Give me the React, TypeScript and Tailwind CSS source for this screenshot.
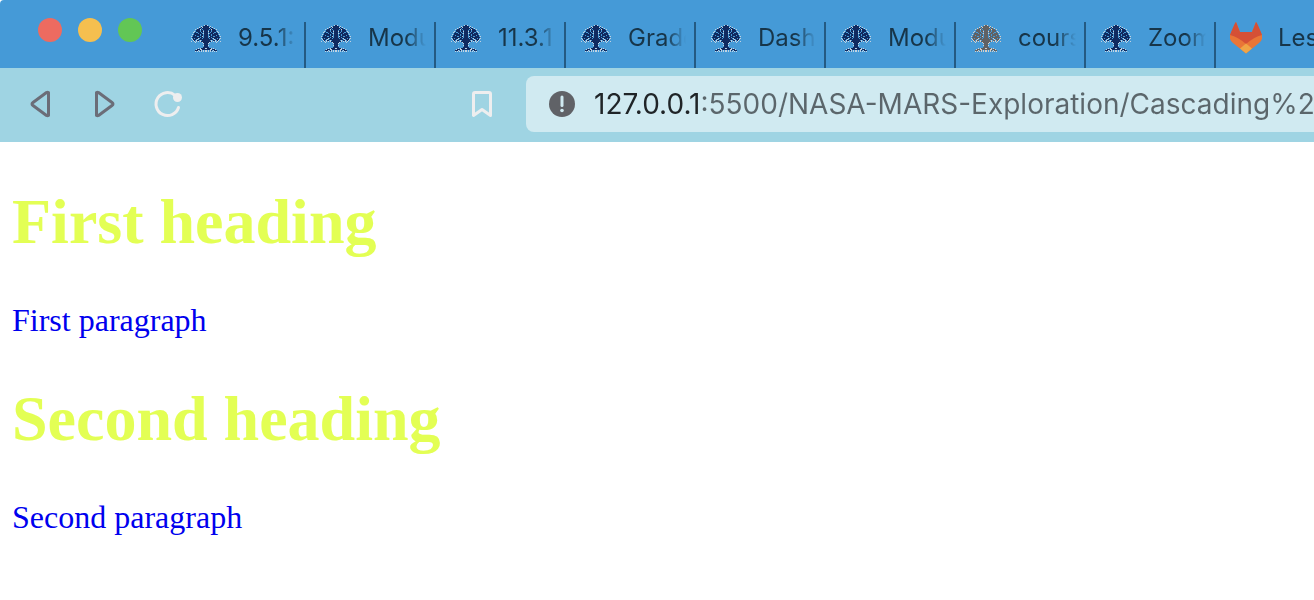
import { useState } from "react";

type TabIcon = "tree" | "grayTree" | "fox";

const tabs: { title: string; icon: TabIcon }[] = [
  { title: "9.5.1:", icon: "tree" },
  { title: "Modu", icon: "tree" },
  { title: "11.3.1", icon: "tree" },
  { title: "Grade", icon: "tree" },
  { title: "Dash", icon: "tree" },
  { title: "Modu", icon: "tree" },
  { title: "cours", icon: "grayTree" },
  { title: "Zoom", icon: "tree" },
  { title: "Les", icon: "fox" },
];

// Left half of the pixel tree, mirrored to the right: # leaf or wood, o light edge
const treeRows = [
  ".............o#",
  "..........o.###",
  "........o.#o###",
  "......o.##.####",
  "....o.###o#.###",
  ".....####.##.##",
  "...o.####.##o##",
  "..o.#..###.#.##",
  "...####.###.o##",
  ".o.######.##.##",
  "..##.####.##.##",
  "o.####..###o.##",
  ".########.##.##",
  "o.#.###o.##.###",
  ".o###.o.#######",
  "..o#.o##.o.####",
  "o..o.o.o.o#####",
  "....o......o###",
  "............o##",
  ".............##",
  "............o##",
  ".............##",
  "............###",
  ".......o.o####o",
  ".....o###oo####",
  "....###o.#o.o.o",
  "....o.o.o.o.o.o",
];

function pixels(mark: string) {
  let d = "";
  treeRows.forEach((row, y) => {
    [...row].forEach((cell, x) => {
      if (cell === mark) d += `M${x + 1} ${y + 3}h1v1h-1zM${30 - x} ${y + 3}h1v1h-1z`;
    });
  });
  return d;
}

const darkPixels = pixels("#");
const lightPixels = pixels("o");

function TreeIcon({ gray = false }: { gray?: boolean }) {
  return (
    <svg viewBox="0 0 32 32" className="size-8 shrink-0" aria-hidden="true" shapeRendering="crispEdges">
      <path d={darkPixels} fill={gray ? "#606163" : "#102a60"} />
      <path d={lightPixels} fill={gray ? "#d5cec7" : "#bfd2e2"} />
    </svg>
  );
}

function FoxIcon() {
  return (
    <svg viewBox="0 0 32 32" className="size-8 shrink-0" aria-hidden="true">
      <path d="M6 0 0 13q-1 5 3 8l13 10.500L29 21q4-3 3-8L26 0l-4 10H10z" fill="#e97637" />
      <path d="M6 0Q5 0 0 13 8 15 16 22 24 15 32 13 27 0 26 0L22 10H10z" fill="#d55036" />
      <path d="m16 21.500 6 5-6 5-6-5z" fill="#f0a545" />
    </svg>
  );
}

function Tab({ title, icon }: { title: string; icon: TabIcon }) {
  return (
    <button
      type="button"
      role="tab"
      className="flex w-[130px] shrink-0 items-start gap-4 border-r-2 border-[#245a82] pr-2 pl-3.5 text-left"
    >
      {icon === "fox" ? <FoxIcon /> : <TreeIcon gray={icon === "grayTree"} />}
      <span className="min-w-0 flex-1 overflow-hidden mask-r-from-65% mask-r-to-100% text-2xl leading-8 whitespace-nowrap text-[#173549]">
        {title}
      </span>
    </button>
  );
}

export default function App() {
  const [url, setUrl] = useState("127.0.0.1:5500/NASA-MARS-Exploration/Cascading%2");
  return (
    <div className="min-h-screen overflow-hidden bg-white font-['Inter','Liberation_Sans',sans-serif]">
      <header>
        <div className="flex h-[68px] overflow-hidden rounded-tl-sm bg-[#459ad7]">
          <div className="flex w-44 shrink-0 gap-4 pt-[18px] pl-[38px]">
            <button type="button" aria-label="Close" className="size-6 rounded-full bg-[#ed6b60]" />
            <button type="button" aria-label="Minimize" className="size-6 rounded-full bg-[#f5bf4f]" />
            <button type="button" aria-label="Zoom window" className="size-6 rounded-full bg-[#62c655]" />
          </div>
          <div role="tablist" className="flex pt-[22px]">
            {tabs.map((tab, index) => (
              <Tab key={index} {...tab} />
            ))}
          </div>
        </div>
        <div className="flex items-center bg-[#9fd4e3] pt-2 pb-2.5">
          <nav className="flex flex-none gap-8 pl-6">
            <button type="button" aria-label="Back">
              <svg viewBox="0 0 32 32" className="size-8" fill="none" stroke="#6b6d78" strokeWidth="3" strokeLinejoin="round">
                <path d="M24.500 4.500v23q-1 .5-2 0L9 17.500q-2-1.500 0-3L22.500 4.500q1-.5 2 0z" />
              </svg>
            </button>
            <button type="button" aria-label="Forward">
              <svg viewBox="0 0 32 32" className="size-8" fill="none" stroke="#6b6d78" strokeWidth="3" strokeLinejoin="round">
                <path d="M8.500 4.500v23q1 .5 2 0L24 17.500q2-1.500 0-3L10.500 4.500q-1-.5-2 0z" />
              </svg>
            </button>
            <button type="button" aria-label="Reload">
              <svg viewBox="0 0 32 32" className="size-8" fill="none" stroke="#eeeeef" strokeWidth="3" strokeLinecap="round">
                <path d="M23 7.300A11.500 11.500 0 1 0 26.500 19.500" />
                <circle cx="25.500" cy="9.500" r="4.500" fill="#eeeeef" stroke="none" />
              </svg>
            </button>
          </nav>
          <button type="button" aria-label="Bookmark" className="ml-[282px] flex-none">
            <svg viewBox="0 0 32 32" className="size-8" fill="none" stroke="#eeeeef" strokeWidth="3" strokeLinejoin="round">
              <path d="M9 4.500h14q1.500 0 1.500 1.500v21.500L16 21.500l-8.500 6V6q0-1.500 1.500-1.500z" />
            </svg>
          </button>
          <div className="ml-7 flex h-14 min-w-0 flex-1 items-center gap-4 rounded-l-lg bg-[#d0eaf1] pl-5">
            <svg viewBox="0 0 32 32" className="size-8 shrink-0" aria-hidden="true">
              <circle cx="16" cy="16" r="13" fill="#606267" />
              <path d="M16 9v8.500" stroke="#d0eaf1" strokeWidth="3" strokeLinecap="round" />
              <circle cx="16" cy="22.500" r="1.800" fill="#d0eaf1" />
            </svg>
            <input
              type="text"
              aria-label="Address"
              value={url}
              onChange={(event) => setUrl(event.target.value)}
              className="h-10 min-w-0 flex-1 bg-linear-to-r from-[#1f2427] from-[107px] to-[#5b666b] to-[107px] bg-clip-text text-[28px] text-transparent outline-none"
            />
          </div>
        </div>
      </header>
      <main className="px-3 pt-[43px] font-['Liberation_Serif',serif]">
        <h1 className="text-[64px] leading-[74px] font-bold text-[#e3ff54]">First heading</h1>
        <p className="mt-[43px] text-[32px] leading-9 text-[#0000ee]">First paragraph</p>
        <h1 className="mt-11 text-[64px] leading-[74px] font-bold text-[#e3ff54]">Second heading</h1>
        <p className="mt-[43px] text-[32px] leading-9 text-[#0000ee]">Second paragraph</p>
      </main>
    </div>
  );
}
